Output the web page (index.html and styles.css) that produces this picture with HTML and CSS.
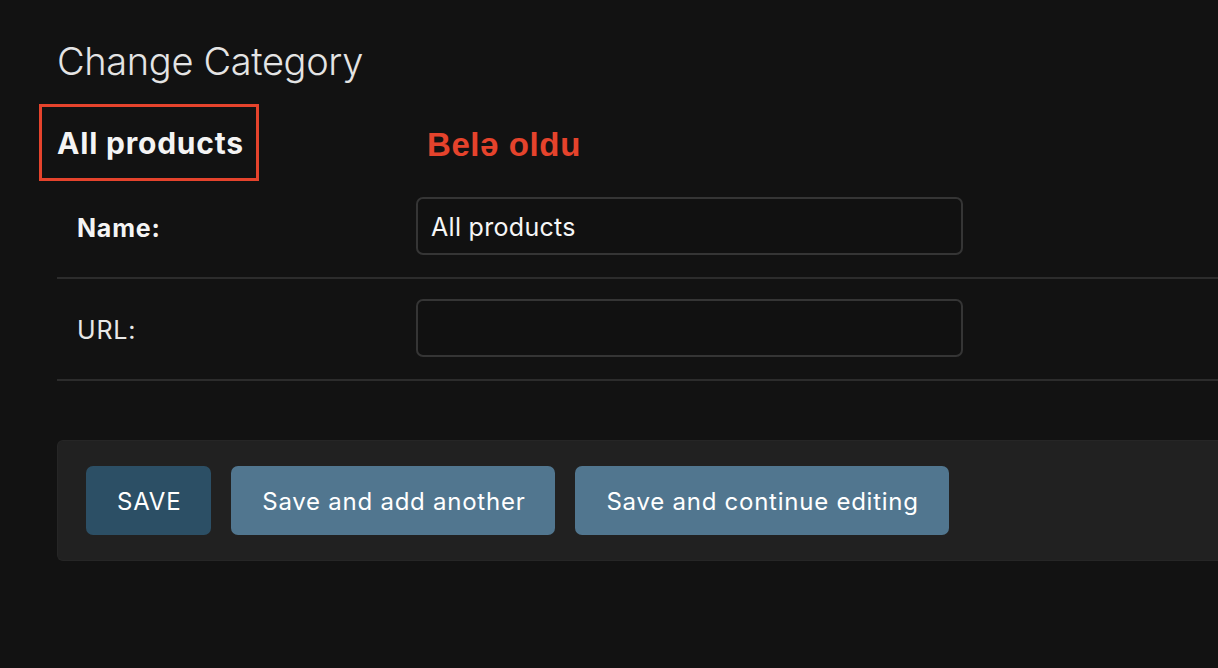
FILE: index.html
```html
<!DOCTYPE html>
<html>
<head>
<meta charset="utf-8">
<link rel="stylesheet" href="styles.css">
</head>
<body>
<div class="page">
  <h1 class="title">Change Category</h1>
  <div class="head-row">
    <div class="marked"><h2 class="obj">All products</h2></div>
    <div class="note">Belə oldu</div>
  </div>
  <div class="fieldset">
    <div class="row">
      <label class="label bold">Name:</label>
      <div class="input">All products</div>
    </div>
    <div class="row">
      <label class="label">URL:</label>
      <div class="input"></div>
    </div>
  </div>
  <div class="submit-row">
    <button class="btn btn-default">SAVE</button>
    <button class="btn">Save and add another</button>
    <button class="btn">Save and continue editing</button>
  </div>
</div>
</body>
</html>
```

FILE: styles.css
```css
html, body {
  margin: 0;
  padding: 0;
  background: #121212;
  height: 100%;
}
body {
  font-family: Inter, "Noto Sans", sans-serif;
  color: #f2f2f2;
  overflow: hidden;
}
.page {
  padding: 0 0 0 57px;
}
.title {
  margin: 0;
  padding-top: 38px;
  font-size: 38px;
  font-weight: 300;
  line-height: 46px;
  color: #e4e4e4;
  letter-spacing: -0.35px;
}
.head-row {
  display: flex;
  align-items: center;
  height: 77px;
  margin-top: 20px;
  margin-bottom: -4px;
}
.marked {
  margin-left: -18px;
  border: 3px solid #e5432c;
  height: 77px;
  box-sizing: border-box;
  display: flex;
  align-items: center;
  padding: 0 12px 0 15px;
}
.obj {
  margin: 0;
  font-size: 30px;
  font-weight: 700;
  letter-spacing: 0.8px;
  color: #f4f4f4;
  line-height: 36px;
  padding-top: 0;
}
.note {
  margin-left: 168px;
  font-family: "Liberation Sans", Arial, sans-serif;
  font-size: 33px;
  font-weight: 700;
  letter-spacing: 0.6px;
  color: #e5432c;
  padding-top: 4px;
}
.fieldset {
  display: flex;
  flex-direction: column;
}
.row {
  display: flex;
  align-items: center;
  padding: 20px 0 22px;
  border-bottom: 2px solid #2c2c2c;
}
.label {
  width: 339px;
  padding-left: 20px;
  padding-top: 4px;
  font-size: 25px;
  letter-spacing: 0.8px;
  color: #e8e8e8;
}
.label.bold {
  font-weight: 700;
  color: #f4f4f4;
}
.input {
  width: 547px;
  height: 58px;
  box-sizing: border-box;
  border: 2px solid #353535;
  border-radius: 7px;
  background: #111111;
  padding: 1px 13px 0;
  display: flex;
  align-items: center;
  font-size: 25px;
  letter-spacing: 0.3px;
  color: #f6f6f6;
}
.submit-row {
  margin-top: 59px;
  background: #212121;
  border: 1px solid #262626;
  border-right: none;
  border-radius: 6px 0 0 6px;
  padding: 25px 29px 25px 28px;
  display: flex;
  gap: 20px;
}
.btn {
  font-family: Inter, "Noto Sans", sans-serif;
  height: 69px;
  border: none;
  border-radius: 7px;
  background: #51768f;
  color: #ffffff;
  font-size: 24px;
  letter-spacing: 0.75px;
  padding: 2px 30px 0 31px;
}
.btn-default {
  background: #2c4f65;
}
```
